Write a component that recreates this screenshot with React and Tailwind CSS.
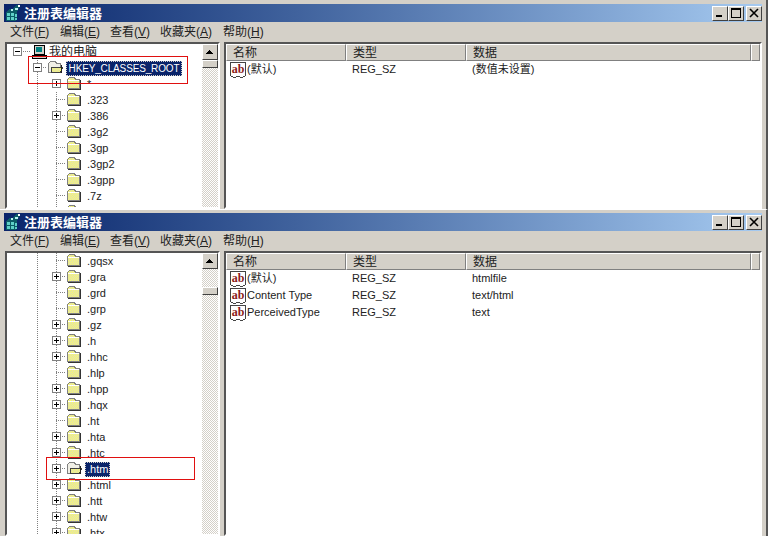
const uiFont = "[font-family:'Liberation_Sans','Noto_Sans_CJK_SC',sans-serif]";

const topTree = [
  { label: ".323" },
  { label: ".386", plus: true },
  { label: ".3g2" },
  { label: ".3gp" },
  { label: ".3gp2" },
  { label: ".3gpp" },
  { label: ".7z" },
  { label: ".ai" },
];

const bottomTree = [
  { label: ".gqsx" },
  { label: ".gra", plus: true },
  { label: ".grd" },
  { label: ".grp" },
  { label: ".gz", plus: true },
  { label: ".h", plus: true },
  { label: ".hhc", plus: true },
  { label: ".hlp" },
  { label: ".hpp", plus: true },
  { label: ".hqx", plus: true },
  { label: ".ht" },
  { label: ".hta", plus: true },
  { label: ".htc", plus: true },
  { label: ".htm", plus: true, selected: true },
  { label: ".html", plus: true },
  { label: ".htt", plus: true },
  { label: ".htw", plus: true },
  { label: ".htx", plus: true },
];

const menus = [
  ["文件(", "F", ")", "w-[50px]"],
  ["编辑(", "E", ")", "w-[50px]"],
  ["查看(", "V", ")", "w-[50px]"],
  ["收藏夹(", "A", ")", "w-[63px]"],
  ["帮助(", "H", ")", "w-[50px]"],
];

function AppIcon() {
  return (
    <svg width="16" height="16" viewBox="0 0 16 16" className="shrink-0" shapeRendering="crispEdges">
      <path d="M1 7l4-3h3l1-2 3-2 3 1-2 4-1 1v9l-2 1H1z" fill="#0b5c66" />
      <path d="M2 8h3v3H2zM6 8h3v3H6zM2 12h3v3H2zM6 12h3v3H6zM10 9h2v3h-2zM10 13h2v2h-2z" fill="#5fd0c8" />
      <path d="M6 4h2v2H6zM10 3h3v2h-3z" fill="#b8f0f0" />
      <path d="M13 0h2v2h-2z" fill="#ffffff" />
    </svg>
  );
}

function WindowButton({ children, className = "" }) {
  return (
    <div
      className={`w-4 h-[15px] flex items-center justify-center bg-[#d4d0c8] border border-t-white border-l-white border-r-[#404040] border-b-[#404040] ${className}`}
    >
      <svg width="10" height="10" viewBox="0 0 10 10" shapeRendering="crispEdges">
        {children}
      </svg>
    </div>
  );
}

function TitleBar({ topClass }) {
  return (
    <div className={`h-[18px] mx-1 flex items-center justify-between bg-gradient-to-r from-[#0a246a] to-[#a6caf0] ${topClass}`}>
      <div className="flex items-center gap-[3px] pl-px">
        <AppIcon />
        <span className="text-[13px] font-bold text-white leading-none">注册表编辑器</span>
      </div>
      <div className="flex items-center">
        <WindowButton>
          <path d="M1 7h6v2H1z" fill="#000" />
        </WindowButton>
        <WindowButton>
          <path d="M0 0h10v2H0zM0 2h1v8H0zM9 2h1v8H9zM0 9h10v1H0z" fill="#000" />
        </WindowButton>
        <WindowButton className="ml-0.5">
          <path d="M1 1l8 8M9 1L1 9" stroke="#000" strokeWidth="1.6" shapeRendering="auto" />
        </WindowButton>
      </div>
    </div>
  );
}

function MenuBar() {
  return (
    <div className="h-5 pl-2.5 flex items-center text-xs text-[#222]">
      {menus.map(([before, key, after, width]) => (
        <span key={key} className={width}>
          {before}
          <span className="underline">{key}</span>
          {after}
        </span>
      ))}
    </div>
  );
}

function Expander({ x, open }) {
  return (
    <g>
      <rect x={x - 4 + 0.5} y="3.5" width="8" height="8" fill="#fff" stroke="#808080" />
      <path d={`M${x - 2} 7.5h5`} stroke="#000" />
      {!open && <path d={`M${x + 0.5} 5v5`} stroke="#000" />}
    </g>
  );
}

// x values below are measured from the tree's inner left edge
function Gutter({ width, trunks = [], branchFrom, branchTo, expander, open }) {
  return (
    <svg width={width} height="16" className="shrink-0" shapeRendering="crispEdges">
      {trunks.map((x) => (
        <path key={x} d={`M${x + 0.5} 0v16`} stroke="#808080" strokeDasharray="1 1" />
      ))}
      {branchTo != null && (
        <path d={`M${branchFrom} 7.5H${branchTo}`} stroke="#808080" strokeDasharray="1 1" />
      )}
      {expander != null && <Expander x={expander} open={open} />}
    </svg>
  );
}

function Folder({ open }) {
  return (
    <svg width="16" height="14" viewBox="0 0 16 14" className="shrink-0 mb-0.5" shapeRendering="crispEdges">
      <defs>
        <pattern id="dither" width="2" height="2" patternUnits="userSpaceOnUse">
          <rect width="2" height="2" fill="#ffff66" />
          <rect width="1" height="1" fill="#d8d8c0" />
          <rect x="1" y="1" width="1" height="1" fill="#d8d8c0" />
        </pattern>
      </defs>
      {open ? (
        <>
          <path d="M1.5 3.5l2-2h5l1 2h4v9h-12z" fill="#f0efe6" stroke="#808080" />
          <path d="M4.5 7.5h11l-2 5h-9z" fill="url(#dither)" stroke="#404040" />
          <path d="M14 5h1v8h-1z" fill="#222" />
        </>
      ) : (
        <>
          <path d="M1.5 3.5l2-2h5l1 2h4v9h-12z" fill="url(#dither)" stroke="#808080" />
          <path d="M2 4h11v1H2z" fill="#fff" />
          <path d="M14 4h1v9h-1zM2 13h13v1H2z" fill="#333" />
        </>
      )}
    </svg>
  );
}

function Computer() {
  return (
    <svg width="16" height="16" viewBox="0 0 16 16" className="shrink-0" shapeRendering="crispEdges">
      <path d="M3 1h10v9H3z" fill="#d4d0c8" stroke="#000" />
      <path d="M5 3h6v5H5z" fill="#008080" />
      <path d="M1 11h14v3H1z" fill="#d4d0c8" stroke="#000" />
      <path d="M3 12h4v1H3z" fill="#808080" />
    </svg>
  );
}

function KeyRow({ item, top }) {
  return (
    <div className="h-4 flex items-center whitespace-nowrap">
      <Gutter
        width={59}
        trunks={top ? [30] : [30, 49]}
        branchFrom={49}
        branchTo={59}
        expander={item.plus ? 49 : undefined}
      />
      {item.selected ? <Folder open /> : <Folder />}
      <span
        className={
          item.selected
            ? "ml-[3px] px-0.5 h-[15px] leading-[15px] bg-[#0a246a] text-white outline-1 outline-dotted outline-[#d4d0c8] -outline-offset-1"
            : "ml-[5px] text-[#222]"
        }
      >
        {item.label}
      </span>
    </div>
  );
}

function Scrollbar({ thumbClass }) {
  return (
    <div className="w-4 shrink-0 flex flex-col bg-[repeating-conic-gradient(#d4d0c8_0_25%,#ffffff_0_50%)] bg-[length:2px_2px]">
      <div className="h-4 shrink-0 flex items-center justify-center bg-[#d4d0c8] border border-t-white border-l-white border-r-[#404040] border-b-[#404040]">
        <svg width="8" height="5" viewBox="0 0 8 5" shapeRendering="crispEdges">
          <path d="M3 0h1v1h1v1h1v1h1v1H0V3h1V2h1V1h1z" fill="#000" />
        </svg>
      </div>
      <div
        className={`h-2 shrink-0 bg-[#d4d0c8] border border-t-white border-l-white border-r-[#404040] border-b-[#404040] ${thumbClass}`}
      />
    </div>
  );
}

function RegIcon() {
  return (
    <svg width="16" height="16" viewBox="0 0 16 16" className="shrink-0">
      <path d="M1 1h14v13h-2v1h-3v-1H6v1H3v-1H1z" fill="#fff" />
      <path d="M0 0h16v1H0zM0 1h1v13H0zM15 1h1v13h-1zM1 14h2v1H1zM13 14h2v1h-2zM3 15h3v1H3zM10 15h3v1h-3zM6 14h4v1H6z" fill="#444" shapeRendering="crispEdges" />
      <text
        x="8"
        y="11"
        textAnchor="middle"
        fontSize="12"
        fontWeight="bold"
        fontFamily="Liberation Serif, serif"
        fill="#8b1a1a"
      >
        ab
      </text>
    </svg>
  );
}

function HeaderCell({ label, className }) {
  return (
    <div
      className={`h-[17px] shrink-0 flex items-center bg-[#d4d0c8] border border-t-white border-l-white border-r-[#808080] border-b-[#808080] text-xs text-[#222] ${className}`}
    >
      {label}
    </div>
  );
}

function ValueList({ rows }) {
  return (
    <div className="flex-1 min-w-0 bg-white border-2 border-t-[#555] border-l-[#555] border-r-white border-b-white overflow-hidden">
      <div className="flex">
        <HeaderCell label="名称" className="w-[120px] pl-1.5" />
        <HeaderCell label="类型" className="w-[120px] pl-1.5" />
        <HeaderCell label="数据" className="flex-1 pl-1.5" />
        <HeaderCell label="" className="w-[9px]" />
      </div>
      <div className="text-[11px] text-[#222]">
        {rows.map(([name, type, data]) => (
          <div key={name} className="h-[17px] flex items-center">
            <div className="w-[120px] pl-1 flex items-center gap-px">
              <RegIcon />
              <span>{name}</span>
            </div>
            <div className="w-[120px] pl-1.5">{type}</div>
            <div className="pl-1.5">{data}</div>
          </div>
        ))}
      </div>
    </div>
  );
}

function RegeditWindow({ heightClass, tree, thumbClass, rows, frameClass, topClass }) {
  return (
    <div
      className={`relative overflow-hidden flex flex-col bg-[#d4d0c8] border-r-2 border-r-[#555] ${heightClass} ${frameClass}`}
    >
      <TitleBar topClass={topClass} />
      <MenuBar />
      <div className="flex-1 min-h-0 flex pl-[5px] pr-1">
        <div className="w-[215px] shrink-0 flex bg-white border-2 border-t-[#555] border-l-[#555] border-r-white border-b-white overflow-hidden">
          <div className="flex-1 min-w-0 text-[11px]">{tree}</div>
          <Scrollbar thumbClass={thumbClass} />
        </div>
        <div className="w-1 shrink-0" />
        <ValueList rows={rows} />
      </div>
    </div>
  );
}

function TopTree() {
  return (
    <>
      <div className="h-4 flex items-center whitespace-nowrap">
        <Gutter width={24} branchFrom={14} branchTo={24} expander={10} open />
        <Computer />
        <span className="ml-[2px] text-xs text-[#222]">我的电脑</span>
      </div>
      <div className="h-4 flex items-center whitespace-nowrap">
        <Gutter width={40} trunks={[30]} branchFrom={30} branchTo={40} expander={30} open />
        <Folder open />
        <span className="ml-[3px] w-[116px] h-[15px] leading-[15px] text-center text-[10px] tracking-[-0.15px] bg-[#0a246a] text-white outline-1 outline-dotted outline-[#d4d0c8] -outline-offset-1">
          HKEY_CLASSES_ROOT
        </span>
      </div>
      <KeyRow item={{ label: "*", plus: true }} top />
      {topTree.map((item) => (
        <KeyRow key={item.label} item={item} />
      ))}
    </>
  );
}

export default function App() {
  return (
    <div className={`relative w-[768px] h-[536px] overflow-hidden flex flex-col ${uiFont}`}>
      <RegeditWindow
        heightClass="h-[209px]"
        topClass="mt-1"
        tree={<TopTree />}
        rows={[["(默认)", "REG_SZ", "(数值未设置)"]]}
      />
      <RegeditWindow
        heightClass="h-[327px]"
        frameClass="border-t border-t-white"
        topClass="mt-[3px]"
        thumbClass="mt-[18px]"
        tree={bottomTree.map((item) => (
          <KeyRow key={item.label} item={item} />
        ))}
        rows={[
          ["(默认)", "REG_SZ", "htmlfile"],
          ["Content Type", "REG_SZ", "text/html"],
          ["PerceivedType", "REG_SZ", "text"],
        ]}
      />
      <div className="absolute left-[28px] top-[56px] w-[160px] h-[28px] border border-[#e01010]" />
      <div className="absolute left-[46px] top-[457px] w-[149px] h-[23px] border border-[#e01010]" />
    </div>
  );
}
